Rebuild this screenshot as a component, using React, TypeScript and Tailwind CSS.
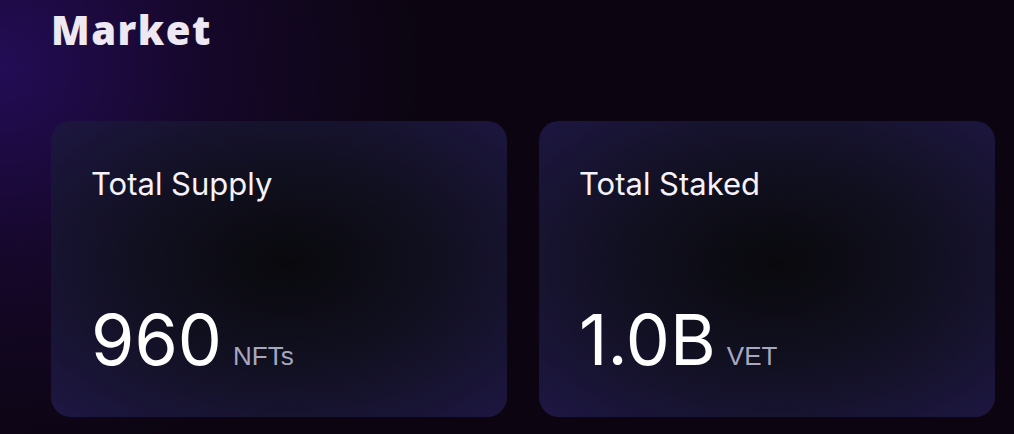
import React from 'react'

type Stat = { label: string; value: string; unit: string }

const stats: Stat[] = [
  { label: 'Total Supply', value: '960', unit: 'NFTs' },
  { label: 'Total Staked', value: '1.0B', unit: 'VET' },
]

export default function App() {
  return (
    <div className="w-[1014px] h-[434px] overflow-hidden bg-[#0b0510] bg-[radial-gradient(ellipse_420px_400px_at_0%_15%,#230d56_0%,#150729_50%,#0c0511_100%)] px-[51px] pt-[10px]">
      <h1 className="font-['Open_Sans',sans-serif] font-extrabold text-[40px] leading-none tracking-[1.5px] text-[#ede8f2]">
        Market
      </h1>

      <div className="mt-[71px] grid grid-cols-2 gap-8 w-[944px]">
        {stats.map((s) => (
          <StatCard key={s.label} {...s} />
        ))}
      </div>
    </div>
  )
}

function StatCard({ label, value, unit }: Stat) {
  return (
    <div className="h-[296px] rounded-[20px] bg-[radial-gradient(ellipse_at_52%_48%,#09090d_0%,#111020_45%,#1e1744_100%)] px-[40px] pt-[45px] pb-[42px] flex flex-col justify-between">
      <span className="font-['Inter',sans-serif] text-[31px] leading-[36px] text-[#f5f3f9]">
        {label}
      </span>
      <div className="flex items-baseline">
        <span className="font-['Inter',sans-serif] text-[70px] leading-none text-white">
          {value}
        </span>
        <span className="ml-[11px] font-['Liberation_Sans',sans-serif] text-[26px] leading-none text-[#a7a8c0]">
          {unit}
        </span>
      </div>
    </div>
  )
}
